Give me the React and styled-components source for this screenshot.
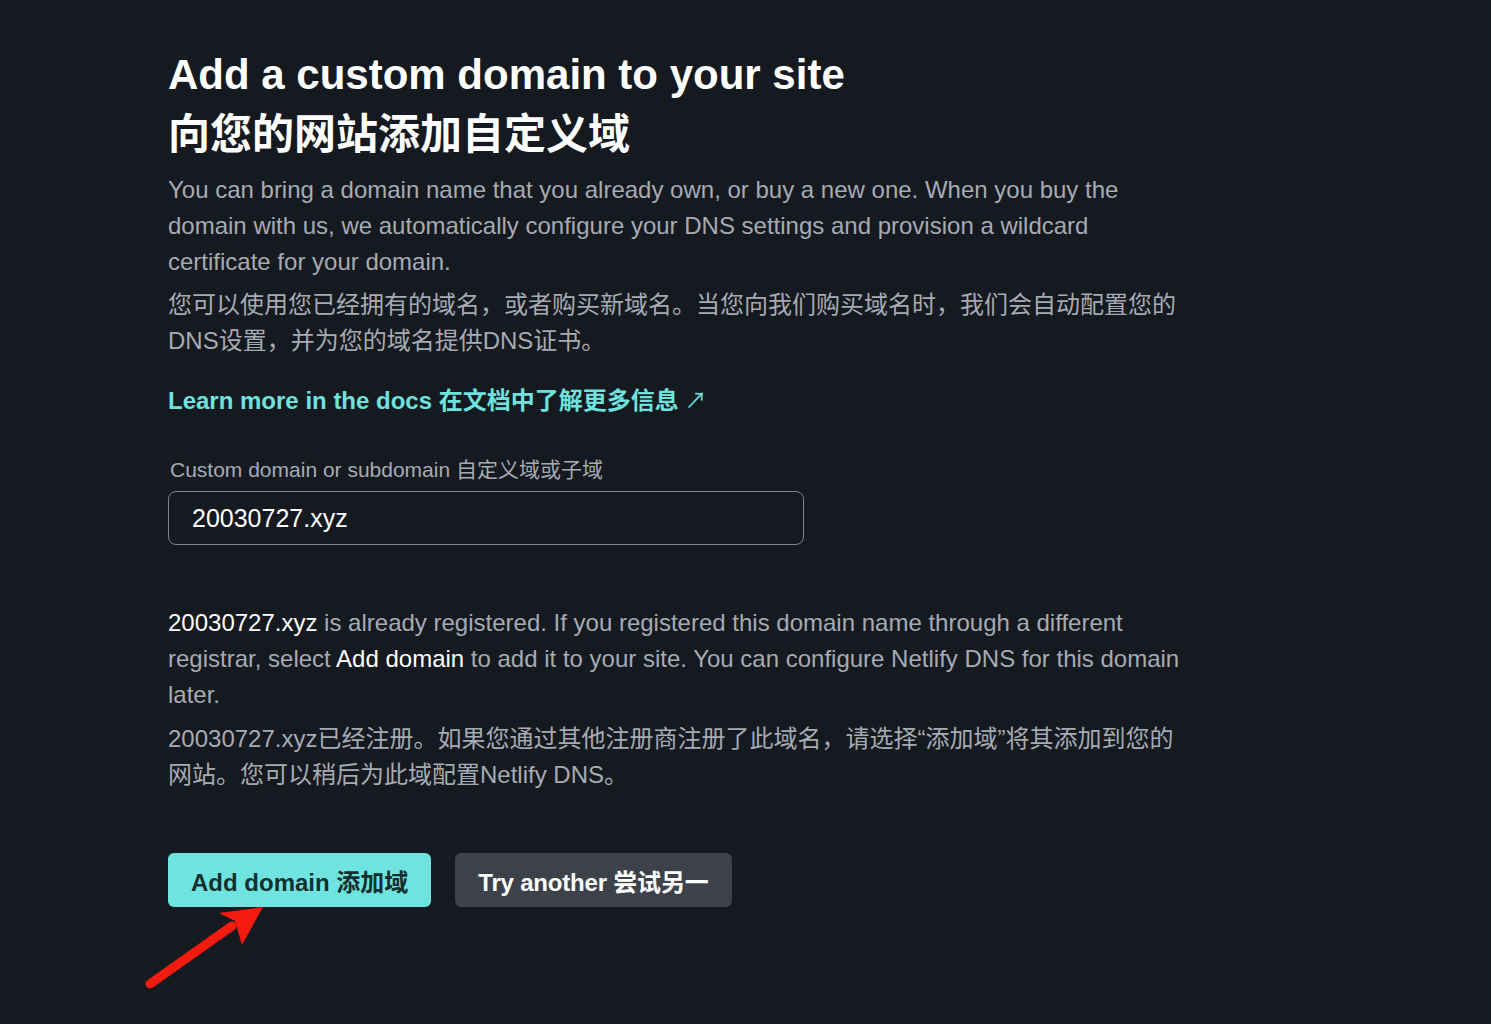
import React from "react";
import styled, { createGlobalStyle } from "styled-components";

const Global = createGlobalStyle`
  html, body { margin: 0; padding: 0; background: #151920; }
  body { font-family: "Liberation Sans", Arial, "Noto Sans CJK SC", sans-serif; }
  * { box-sizing: border-box; }
`;

const Page = styled.div`
  position: relative;
  min-height: 1024px;
  padding: 45px 0 0 168px;
  background: #151920;
`;

const Content = styled.div`
  width: 1020px;
  display: flex;
  flex-direction: column;
`;

const Title = styled.h1`
  margin: 0;
  font-size: 42px;
  line-height: 60px;
  font-weight: 700;
  color: #ffffff;
`;

const Para = styled.p`
  margin: ${(p) => p.$mt || 0}px 0 0;
  font-size: 24px;
  line-height: 36px;
  color: #a6abb3;
`;

const Strong = styled.span`
  color: #ffffff;
`;

const DocLink = styled.a`
  margin-top: 24px;
  font-size: 24px;
  line-height: 36px;
  font-weight: 700;
  color: #6fe2de;
  text-decoration: none;
  display: inline-flex;
  align-items: center;
  gap: 6px;
  align-self: flex-start;
`;

const LinkArrow = styled.span`
  font-weight: 400;
  font-size: 22px;
`;

const Label = styled.label`
  margin-top: 36px;
  padding-left: 2px;
  font-size: 21px;
  line-height: 30px;
  color: #a6abb3;
`;

const Input = styled.div`
  margin-top: 6px;
  width: 636px;
  height: 54px;
  border: 1px solid #7d828b;
  border-radius: 8px;
  display: flex;
  align-items: center;
  padding-left: 23px;
  font-size: 25px;
  color: #ffffff;
`;

const Message = styled.div`
  margin-top: 60px;
  display: flex;
  flex-direction: column;
`;

const Actions = styled.div`
  margin-top: 60px;
  display: flex;
  gap: 24px;
`;

const Button = styled.button`
  height: 54px;
  border: none;
  border-radius: 6px;
  padding: 0 ${(p) => (p.$primary ? 23 : 23)}px;
  font-family: inherit;
  font-size: 24px;
  font-weight: 700;
  letter-spacing: ${(p) => (p.$primary ? 0 : -0.2)}px;
  background: ${(p) => (p.$primary ? "#6fe3df" : "#3d424a")};
  color: ${(p) => (p.$primary ? "#12302f" : "#ffffff")};
  cursor: pointer;
`;

const Annotation = styled.svg`
  position: absolute;
  left: 0;
  top: 0;
  pointer-events: none;
`;

export default function App() {
  return (
    <>
      <Global />
      <Page>
        <Content>
          <Title>
            Add a custom domain to your site
            <br />
            向您的网站添加自定义域
          </Title>
          <Para $mt={7}>
            You can bring a domain name that you already own, or buy a new one. When you buy the domain
            with us, we automatically configure your DNS settings and provision a wildcard certificate for
            your domain.
          </Para>
          <Para $mt={7}>
            您可以使用您已经拥有的域名，或者购买新域名。当您向我们购买域名时，我们会自动配置您的DNS设置，并为您的域名提供DNS证书。
          </Para>
          <DocLink href="#">
            <span>Learn more in the docs 在文档中了解更多信息</span>
            <LinkArrow>↗</LinkArrow>
          </DocLink>
          <Label>Custom domain or subdomain 自定义域或子域</Label>
          <Input>20030727.xyz</Input>
          <Message>
            <Para>
              <Strong>20030727.xyz</Strong> is already registered. If you registered this domain name
              through a different registrar, select <Strong>Add domain</Strong> to add it to your site. You
              can configure Netlify DNS for this domain later.
            </Para>
            <Para $mt={8}>
              20030727.xyz已经注册。如果您通过其他注册商注册了此域名，请选择“添加域”将其添加到您的网站。您可以稍后为此域配置Netlify DNS。
            </Para>
          </Message>
          <Actions>
            <Button $primary>Add domain 添加域</Button>
            <Button>Try another 尝试另一</Button>
          </Actions>
        </Content>
        <Annotation width="1491" height="1024" viewBox="0 0 1491 1024">
          <line x1="150" y1="984" x2="232" y2="926" stroke="#f31a10" strokeWidth="9" strokeLinecap="round" />
          <polygon points="263,907 219,913 235,921 242,945" fill="#f31a10" />
        </Annotation>
      </Page>
    </>
  );
}
